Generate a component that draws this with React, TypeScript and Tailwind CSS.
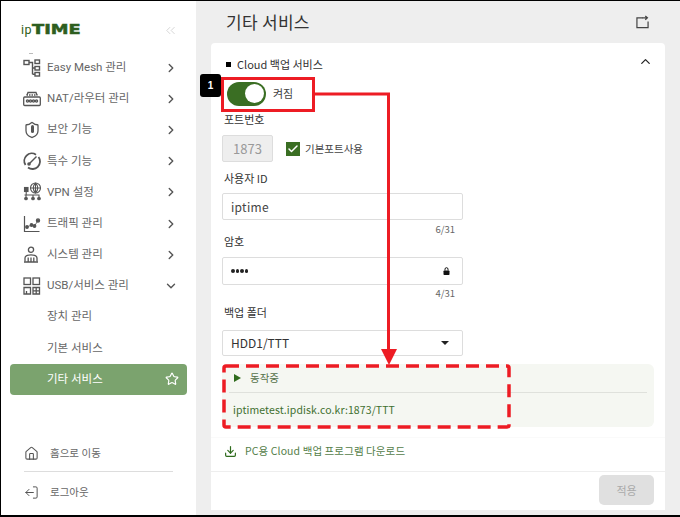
import React from 'react'
import { ChevronRight, ChevronDown, ChevronUp, ChevronsLeft, Star, Home, LogOut, Download, Check, Shield } from 'lucide-react'

const KR = "font-['Roboto','Noto_Sans_CJK_KR',sans-serif]"

const MeshIcon = () => (
  <svg width="18" height="18" viewBox="0 0 18 18" fill="none" stroke="#555" strokeWidth="1.4">
    <rect x="1" y="1.500" width="5" height="4" />
    <rect x="12" y="1" width="4.500" height="3.500" />
    <rect x="12" y="7.500" width="4.500" height="3.500" />
    <rect x="12" y="13.500" width="4.500" height="3.500" />
    <path d="M6 3.500h3.500M9.500 2.800v12.500M9.500 9h2.500M9.500 15.200h2.500" />
  </svg>
)
const NatIcon = () => (
  <svg width="18" height="16" viewBox="0 0 18 16" fill="none" stroke="#555" strokeWidth="1.3">
    <path d="M4 4 L5 1.500 H13 L14 4" />
    <path d="M3.500 4h11" strokeDasharray="1.500 1" />
    <rect x="0.700" y="6" width="16.600" height="8.500" rx="1" />
    <circle cx="4.500" cy="10" r="1.100" /><circle cx="7.500" cy="10" r="1.100" /><circle cx="10.500" cy="10" r="1.100" /><circle cx="13.500" cy="10" r="1.100" />
  </svg>
)
const ShieldKey = () => (
  <span className="relative flex h-[18px] w-[18px] items-center justify-center">
    <Shield size={18} strokeWidth={1.7} className="text-[#555]" />
    <span className="absolute top-[4px] h-[8px] w-[3px] rounded-full bg-[#555]" />
  </span>
)
const SpeedIcon = () => (
  <svg width="18" height="18" viewBox="0 0 18 18" fill="none" stroke="#555" strokeWidth="1.800">
    <path d="M13 2.700A7.500 7.500 0 0 0 2.500 13" />
    <path d="M15.500 5A7.500 7.500 0 0 1 5 15.500" />
    <path d="M6 12L13.500 4.500" strokeWidth="1.500" />
    <circle cx="6" cy="12" r="1.800" fill="#555" stroke="none" />
  </svg>
)
const VpnIcon = () => (
  <svg width="20" height="20" viewBox="0 0 20 20" fill="none" stroke="#555" strokeWidth="1.100">
    <circle cx="12.500" cy="6" r="5" />
    <path d="M7.500 6h10M12.500 1v10M12.500 1c-3 3-3 7 0 10M12.500 1c3 3 3 7 0 10" />
    <rect x="1.500" y="5.500" width="3.500" height="4" fill="#555" />
    <path d="M3.200 9.500v3M1.500 13h15M3 13v2M10 13v2M16 13v2" />
    <circle cx="3" cy="16.500" r="1.300" fill="#555" /><circle cx="10" cy="16.500" r="1.300" fill="#555" /><circle cx="16" cy="16.500" r="1.300" fill="#555" />
  </svg>
)
const TrafficIcon = () => (
  <svg width="18" height="18" viewBox="0 0 18 18" fill="none" stroke="#555" strokeWidth="1.200">
    <path d="M1.500 1v15.500H16.500" />
    <path d="M4 12l4.500-2 3 1L15 5.500" strokeWidth="0.800" />
    <circle cx="4" cy="12" r="1.300" fill="#555" /><circle cx="8.500" cy="10" r="1.300" fill="#555" /><circle cx="11.500" cy="11" r="1.300" fill="#555" /><circle cx="15" cy="5.500" r="1.600" fill="#555" />
  </svg>
)
const SystemIcon = () => (
  <svg width="16" height="18" viewBox="0 0 16 18" fill="none" stroke="#555" strokeWidth="1.300">
    <circle cx="8" cy="3.800" r="2.600" />
    <path d="M2 15.500V12c0-2 2-3.200 6-3.200s6 1.200 6 3.200v3.500" />
    <path d="M1 16h14M5.200 11.500v4M8 11.500v4M10.800 11.500v4" />
  </svg>
)
const UsbIcon = () => (
  <svg width="18" height="18" viewBox="0 0 18 18" fill="none" stroke="#555" strokeWidth="1.300">
    <rect x="1" y="1" width="6.500" height="6.500" />
    <rect x="10" y="1" width="6.500" height="6.500" />
    <path d="M1 17v-6.500h6.500V17zM3.500 14v3M10 10.500h6.500V17H10zM13.200 10.500V17M10 13.800h6.500" />
  </svg>
)

const menu = [
  { label: 'Easy Mesh 관리', icon: <MeshIcon /> },
  { label: 'NAT/라우터 관리', icon: <NatIcon /> },
  { label: '보안 기능', icon: <ShieldKey /> },
  { label: '특수 기능', icon: <SpeedIcon /> },
  { label: 'VPN 설정', icon: <VpnIcon /> },
  { label: '트래픽 관리', icon: <TrafficIcon /> },
  { label: '시스템 관리', icon: <SystemIcon /> },
]

function Sidebar() {
  return (
    <aside className={`relative flex w-[195px] shrink-0 flex-col bg-white ${KR}`}>
      <div className="flex h-[50px] items-center justify-between pl-[20px] pr-[18px] pt-[8px]">
        <div className="flex items-baseline leading-none text-[#2e5e20]">
          <span className="text-[12.5px] tracking-[0.5px]">ip</span>
          <span className="origin-left font-['DejaVu_Sans',sans-serif] text-[13.5px] font-bold [-webkit-text-stroke:0.5px_#2e5e20] [transform:scaleX(1.32)]">TIME</span>
        </div>
        <ChevronsLeft size={15} strokeWidth={1.3} className="text-[#ccc]" />
      </div>
      <span className="absolute left-[28px] top-[52px] h-px w-[4px] bg-[#bbb]" />
      <div className="mt-[1px]">
        {menu.map(m => (
          <div key={m.label} className="flex h-[31.2px] items-center pl-[22px] pr-[18px] text-[11.5px] text-[#666]">
            <span className="flex w-[24px] items-center">{m.icon}</span>
            <span className="flex-1">{m.label}</span>
            <ChevronRight size={14} strokeWidth={2.4} className="text-[#555]" />
          </div>
        ))}
        <div className="flex h-[31.2px] items-center pl-[22px] pr-[18px] text-[11.5px] text-[#666]">
          <span className="flex w-[24px] items-center"><UsbIcon /></span>
          <span className="flex-1">USB/서비스 관리</span>
          <ChevronDown size={14} strokeWidth={2.4} className="text-[#555]" />
        </div>
        <div className="flex h-[31.2px] items-center pl-[46px] text-[11.5px] text-[#666]">장치 관리</div>
        <div className="flex h-[31.2px] items-center pl-[46px] text-[11.5px] text-[#666]">기본 서비스</div>
        <div className="mx-[9px] flex h-[31px] items-center justify-between rounded-[4px] bg-[#7ba36e] pl-[37px] pr-[8px] text-[11.5px] text-white">
          <span>기타 서비스</span>
          <Star size={14} strokeWidth={2} />
        </div>
      </div>
      <div className="mt-[38px] px-[23px] text-[10.5px] text-[#666]">
        <div className="flex h-[38px] items-center gap-[11px] pt-[4px]">
          <Home size={15} strokeWidth={1.7} className="text-[#555]" />
          <span>홈으로 이동</span>
        </div>
        <div className="h-px bg-[#ddd]" />
        <div className="flex h-[39px] items-center gap-[11px] pt-[3px]">
          <LogOut size={15} strokeWidth={1.6} className="rotate-180 text-[#555]" />
          <span>로그아웃</span>
        </div>
      </div>
    </aside>
  )
}

function Main() {
  return (
    <main className="flex min-w-0 flex-1 flex-col bg-[#eeeeee] pl-[15px] pr-[15px] font-['Noto_Sans_CJK_KR','Noto_Sans',sans-serif]">
      <div className="flex h-[42px] items-center justify-between pl-[15px] pr-[16px]">
        <h1 className="text-[17px] font-normal tracking-[0.3px] text-[#333]">기타 서비스</h1>
        <svg width="13" height="14" viewBox="0 0 14 15" fill="none" stroke="#444" strokeWidth="1.300">
          <path d="M7 3H1v10.500h12V7" />
          <path d="M6.500 3h5.500M10 1l2.300 2L10 5" />
        </svg>
      </div>
      <section className="flex h-[467px] flex-col rounded-t-[4px] bg-white">
        <div className="flex h-[37px] items-center justify-between pl-[15px] pr-[12px] pt-[5px] text-[11px] text-[#333]">
          <span className="flex items-center gap-[6px]">
            <span className="h-[5px] w-[5px] bg-black" />
            Cloud 백업 서비스
          </span>
          <ChevronUp size={15} strokeWidth={2} className="mb-[6px] text-[#222]" />
        </div>
        <div className="flex-1 px-[11px]">
          <div className="flex h-[27px] items-center gap-[7px] pl-[5px]">
            <div className="flex h-[24px] w-[39px] items-center justify-end rounded-full bg-[#3a6e23] pr-[2px]">
              <span className="h-[19px] w-[19px] rounded-full bg-white" />
            </div>
            <span className="text-[11px] text-[#444]">켜짐</span>
          </div>
          <div className="mt-[6px] h-[13px] pl-[2px] text-[11px] leading-[13px] text-[#333]">포트번호</div>
          <div className="mt-[9px] flex items-center gap-[13px]">
            <div className="flex h-[27px] w-[51px] items-center justify-center rounded-[2px] border border-[#ddd] bg-[#eeeeee] text-[13px] text-[#999]">1873</div>
            <div className="flex items-center gap-[5px] text-[10.5px] text-[#444]">
              <span className="flex h-[14px] w-[14px] items-center justify-center bg-[#3a6e23]">
                <Check size={12} strokeWidth={3} className="text-white" />
              </span>
              기본포트사용
            </div>
          </div>
          <div className="mt-[10px] h-[13px] pl-[2px] text-[11px] leading-[13px] text-[#333]">사용자 ID</div>
          <div className="mt-[8px] flex h-[27px] w-[241px] items-center rounded-[2px] border border-[#ddd] px-[8px] text-[12px] tracking-[0.3px] text-[#444]">iptime</div>
          <div className="mt-[3px] flex h-[12px] w-[241px] items-center justify-end pr-[8px] text-[9.5px] text-[#666]">6/31</div>
          <div className="h-[13px] pl-[2px] text-[11px] leading-[13px] text-[#333]">암호</div>
          <div className="mt-[9px] flex h-[28px] w-[241px] items-center justify-between rounded-[2px] border border-[#ddd] pl-[8px] pr-[12px]">
            <span className="flex gap-[1px]">
              {[0, 1, 2, 3].map(i => <span key={i} className="h-[3.5px] w-[3.5px] rounded-full bg-[#222]" />)}
            </span>
            <svg width="7" height="8" viewBox="0 0 7 8" fill="none">
              <path d="M2 3.500V2.200a1.500 1.500 0 0 1 3 0V3.500" stroke="#111" strokeWidth="1" />
              <rect x="0.500" y="3.500" width="6" height="4.500" rx="0.800" fill="#111" />
            </svg>
          </div>
          <div className="mt-[2px] flex h-[12px] w-[241px] items-center justify-end pr-[8px] text-[9.5px] text-[#666]">4/31</div>
          <div className="mt-[7px] h-[13px] pl-[2px] text-[11px] leading-[13px] text-[#333]">백업 폴더</div>
          <div className="mt-[11px] flex h-[26px] w-[241px] items-center justify-between rounded-[2px] border border-[#ddd] pl-[8px] pr-[13px] text-[12px] text-[#333]">
            HDD1/TTT
            <span className="h-0 w-0 border-x-[4px] border-t-[4px] border-x-transparent border-t-[#222]" />
          </div>
          <div className="mt-[8px] h-[63px] rounded-[6px] bg-[#f5f7f2] pl-[7px] pr-[7px]">
            <div className="flex h-[29px] items-center gap-[9px] border-b border-[#dfe1dc] pl-[5px] text-[10.5px] text-[#55724a]">
              <span className="h-0 w-0 border-y-[4.5px] border-l-[7px] border-y-transparent border-l-[#2f6b1d]" />
              동작중
            </div>
            <div className="flex h-[33px] items-center pl-[4px] text-[10.5px] tracking-[0.1px] text-[#3f7030]">iptimetest.ipdisk.co.kr:1873/TTT</div>
          </div>
          <div className="mx-[-11px] mt-[10px] border-t border-[#fafafa]" />
          <div className="mt-[3px] flex h-[20px] items-center gap-[8px] pl-[2px] text-[10.5px] tracking-[0.1px] text-[#55804a]">
            <Download size={13} strokeWidth={2.2} className="text-[#2f6b1d]" />
            PC용 Cloud 백업 프로그램 다운로드
          </div>
        </div>
        <div className="flex h-[39px] items-start justify-end border-t border-[#eeeeee] pr-[11px] pt-[3px]">
          <button className="h-[30px] w-[55px] rounded-[5px] bg-[#e0e0e0] text-[11px] text-[#aaa]">적용</button>
        </div>
      </section>
    </main>
  )
}

export default function App() {
  return (
    <div className="relative h-[517px] w-[680px] overflow-hidden border-t border-b-2 border-l border-black bg-white">
      <div className="flex h-full">
        <Sidebar />
        <Main />
      </div>
      {/* annotation overlay */}
      <div className="absolute left-[199px] top-[73px] flex h-[23px] w-[21px] items-center justify-center rounded-[3px] bg-black font-['Liberation_Sans',sans-serif] text-[10px] font-bold text-white">1</div>
      <div className="absolute left-[220px] top-[76px] h-[35px] w-[94px] border-[3px] border-[#ed1c24]" />
      <svg className="absolute left-0 top-0" width="680" height="517" fill="none">
        <path d="M312 93H387.500V350" stroke="#ed1c24" strokeWidth="3" />
        <path d="M380 348H396L388 364Z" fill="#ed1c24" />
        <rect x="223" y="365" width="285" height="61" rx="2" stroke="#ed1c24" strokeWidth="3.500" strokeDasharray="13 7" />
      </svg>
    </div>
  )
}
